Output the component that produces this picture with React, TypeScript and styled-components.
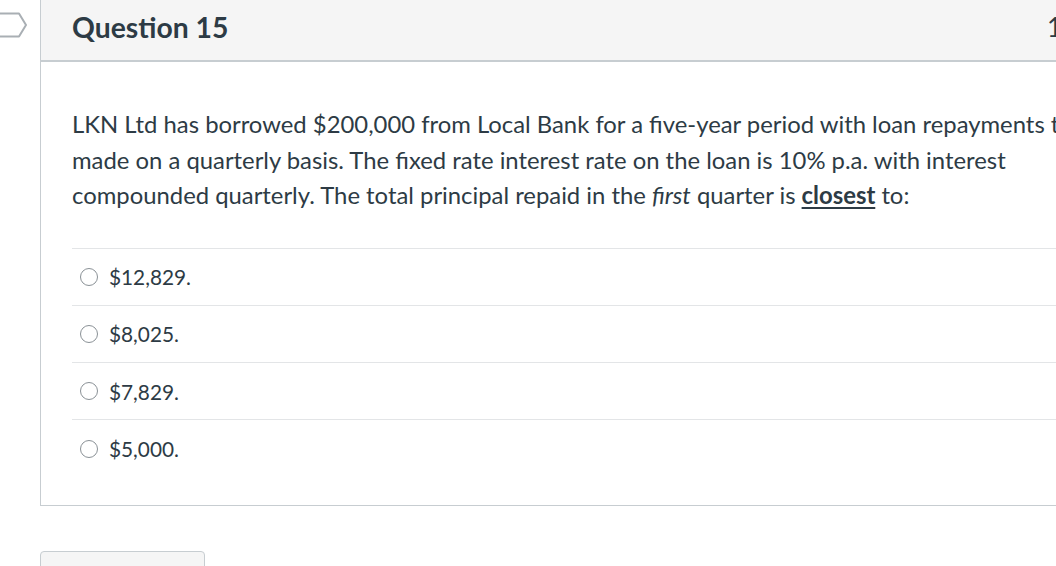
import styled, { createGlobalStyle } from 'styled-components';

const GlobalStyle = createGlobalStyle`
  html, body {
    margin: 0;
    padding: 0;
    background: #ffffff;
    overflow: hidden;
  }
  body {
    font-family: Lato, 'Noto Sans', 'Liberation Sans', sans-serif;
    color: #2d3b45;
  }
`;

const Page = styled.div`
  display: flex;
  align-items: flex-start;
  width: 1056px;
  height: 566px;
  overflow: hidden;
`;

const Gutter = styled.div`
  flex: 0 0 40px;
  padding-top: 12px;
`;

const Content = styled.div`
  flex: 0 0 1100px;
`;

const Panel = styled.div`
  border-left: 1px solid #c7cdd1;
  border-bottom: 1px solid #c7cdd1;
  background: #ffffff;
`;

const Header = styled.div`
  display: flex;
  align-items: center;
  height: 62px;
  padding: 0 0 6px 31px;
  background: #f5f5f5;
  border-bottom: 2px solid #c7cdd1;
  box-sizing: border-box;
`;

const Title = styled.h2`
  margin: 0;
  flex: 0 0 975px;
  font-size: 28.3px;
  font-weight: 700;
  color: #2d3b45;
`;

const Points = styled.span`
  font-size: 26px;
  font-weight: 400;
  color: #2d3b45;
  white-space: nowrap;
`;

const Body = styled.div`
  padding: 44px 0 28px 31px;
`;

const Prompt = styled.p`
  margin: 0 0 35px;
  font-size: 23.85px;
  line-height: 35.5px;
  width: 1200px;
`;

const Strong = styled.strong`
  text-decoration: underline;
  text-underline-offset: 3px;
  font-weight: 700;
`;

const Answers = styled.ul`
  list-style: none;
  margin: 0;
  padding: 0;
`;

const Answer = styled.li`
  display: flex;
  align-items: center;
  gap: 11px;
  height: 56.3px;
  padding-left: 8px;
  border-top: 1px solid #e3e5e7;
  font-size: 20.8px;
`;

const Radio = styled.span`
  width: 16px;
  height: 16px;
  border-radius: 50%;
  border: 1px solid #8a9196;
  background: #fff;
  flex: 0 0 auto;
`;

const Button = styled.div`
  margin-top: 45px;
  width: 163px;
  height: 40px;
  border: 1px solid #c7cdd1;
  border-radius: 4px;
  background: #f5f5f5;
`;

function FlagIcon() {
  return (
    <svg width="40" height="28" viewBox="0 0 40 28">
      <path
        d="M-6 1.5 H19 L26 13 L19 24.5 H-6"
        fill="none"
        stroke="#a9afb4"
        strokeWidth="2"
        strokeLinejoin="round"
      />
    </svg>
  );
}

const answers = ['$12,829.', '$8,025.', '$7,829.', '$5,000.'];

export default function App() {
  return (
    <>
      <GlobalStyle />
      <Page>
        <Gutter>
          <FlagIcon />
        </Gutter>
        <Content>
          <Panel>
            <Header>
              <Title>Question 15</Title>
              <Points>1 pts</Points>
            </Header>
            <Body>
              <Prompt>
                LKN Ltd has borrowed $200,000 from Local Bank for a five-year period with loan repayments to be
                <br />
                made on a quarterly basis. The fixed rate interest rate on the loan is 10% p.a. with interest
                <br />
                compounded quarterly. The total principal repaid in the <em>first</em> quarter is{' '}
                <Strong>closest</Strong> to:
              </Prompt>
              <Answers>
                {answers.map((a) => (
                  <Answer key={a}>
                    <Radio />
                    {a}
                  </Answer>
                ))}
              </Answers>
            </Body>
          </Panel>
          <Button />
        </Content>
      </Page>
    </>
  );
}
